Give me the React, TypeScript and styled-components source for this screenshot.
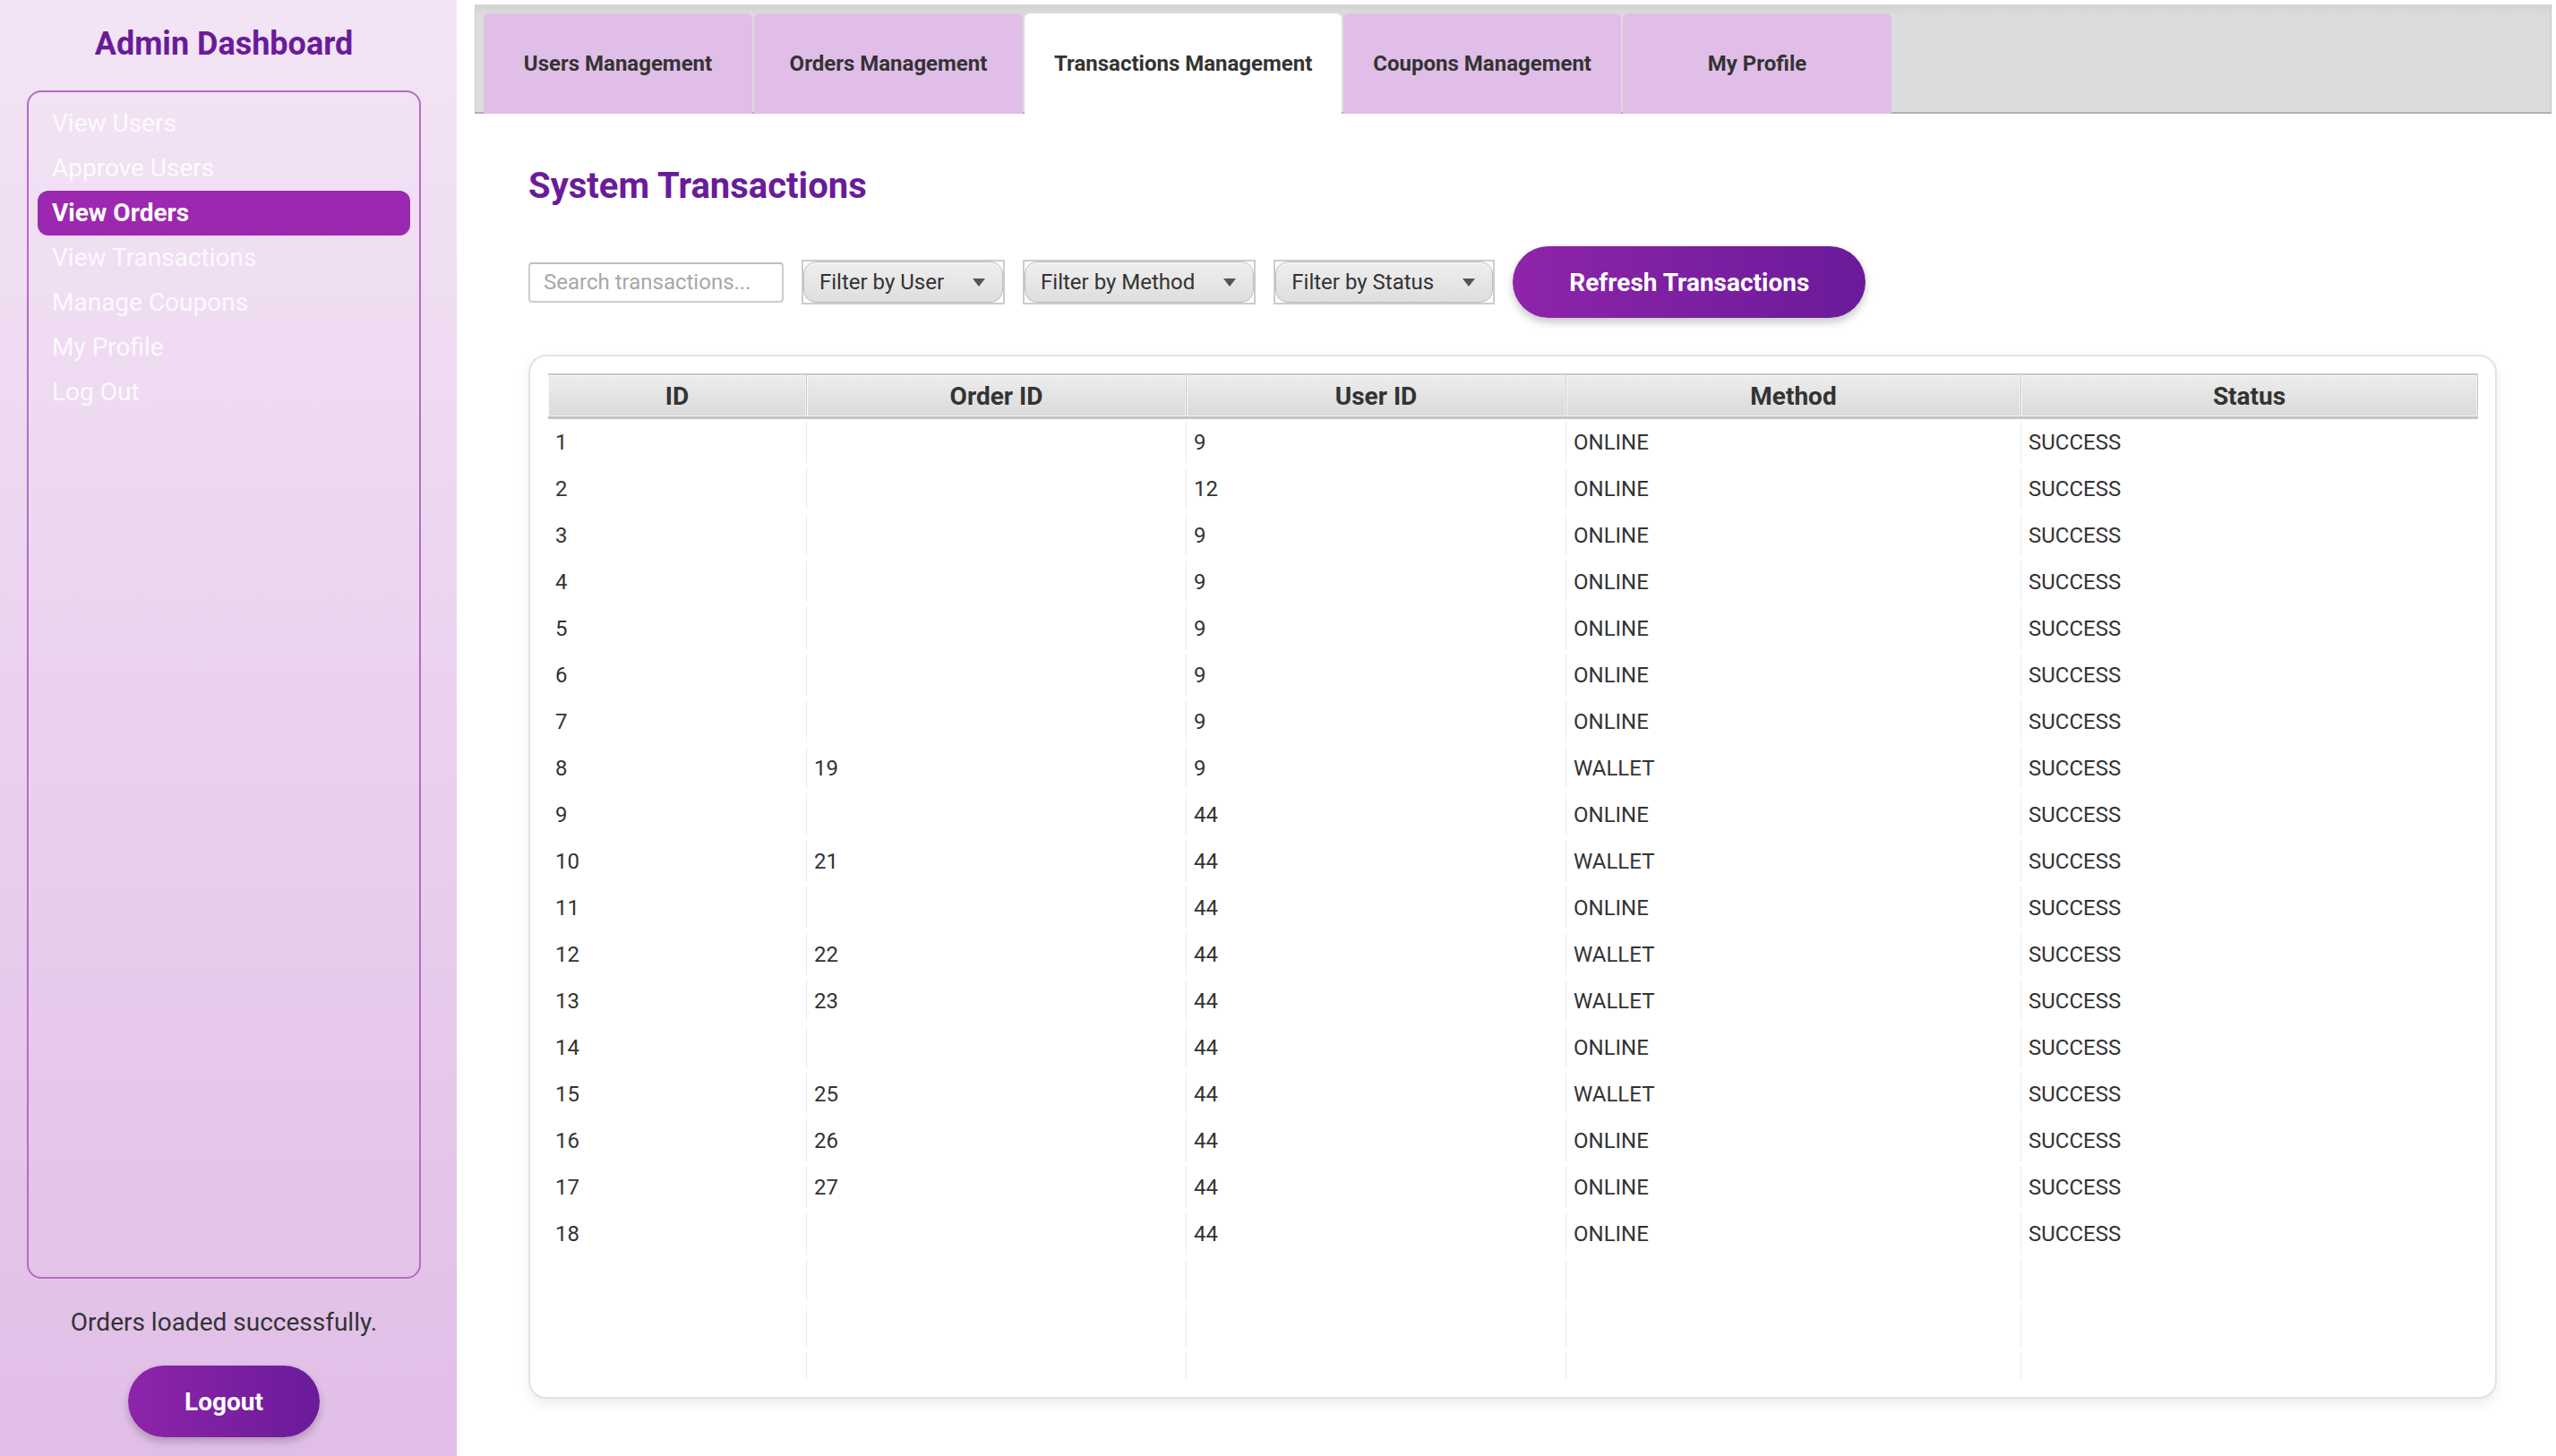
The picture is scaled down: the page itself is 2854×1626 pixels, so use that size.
import React from 'react';
import styled, { createGlobalStyle } from 'styled-components';

const GlobalStyle = createGlobalStyle`
  html, body { margin: 0; padding: 0; height: 100%; background: #fff; }
  body { font-family: Roboto, "Liberation Sans", Arial, sans-serif; color: #333; }
  #root { height: 100%; }
  *, *::before, *::after { box-sizing: border-box; }
`;

const Page = styled.div`
  display: grid;
  grid-template-columns: 510px 1fr;
  height: 100vh;
  overflow: hidden;
`;

const Sidebar = styled.aside`
  display: flex;
  flex-direction: column;
  padding: 28px 40px 21px 30px;
  background: linear-gradient(180deg, #f3e5f5 0%, #e1bee7 100%);
`;

const Brand = styled.h1`
  margin: 0;
  font-size: 36px;
  line-height: 43px;
  font-weight: 700;
  color: #6a1b9a;
  text-align: center;
`;

const NavBox = styled.nav`
  margin-top: 30px;
  flex: 1;
  min-height: 0;
  border: 2px solid #ba68c8;
  border-radius: 16px;
  padding: 10px;
  display: flex;
  flex-direction: column;
`;

const NavItem = styled.div<{ $active?: boolean }>`
  height: 50px;
  line-height: 50px;
  padding-left: 16px;
  font-size: 28px;
  border-radius: 12px;
  color: ${(p) => (p.$active ? '#ffffff' : 'rgba(255,255,255,0.85)')};
  font-weight: ${(p) => (p.$active ? 700 : 400)};
  background: ${(p) => (p.$active ? '#9c27b0' : 'transparent')};
`;

const StatusText = styled.p`
  margin: 32px 0 0;
  font-size: 28px;
  line-height: 34px;
  text-align: center;
  color: #333;
`;

const PillButton = styled.button`
  height: 80px;
  border: none;
  border-radius: 40px;
  background: linear-gradient(90deg, #8e24aa 0%, #6a1b9a 100%);
  color: #fff;
  font-family: Roboto, "Liberation Sans", Arial, sans-serif;
  font-size: 28px;
  font-weight: 700;
  box-shadow: 0 5px 10px rgba(0, 0, 0, 0.22);
  cursor: pointer;
`;

const LogoutButton = styled(PillButton)`
  align-self: center;
  margin-top: 31px;
  width: 214px;
`;

const RefreshButton = styled(PillButton)`
  padding: 0 63px;
`;

const Main = styled.main`
  display: flex;
  flex-direction: column;
  padding: 5px 5px 0 20px;
  min-width: 0;
  min-height: 0;
  background: #fff;
`;

const TabBar = styled.div`
  display: flex;
  align-items: flex-end;
  gap: 2px;
  height: 122px;
  padding: 10px 0 0 10px;
  background: linear-gradient(180deg, #d2d2d2 0px, #dcdcdc 12px, #dcdcdc 100%);
  box-shadow: inset 0 -2px 0 #b0b0b0, inset -1px 0 0 #c4c4c4, inset 1px 0 0 #cfcfcf;
`;

const Tab = styled.div<{ $active?: boolean }>`
  height: 112px;
  min-width: 300px;
  padding: 0 33px;
  display: flex;
  align-items: center;
  justify-content: center;
  font-size: 24px;
  font-weight: 700;
  color: #333;
  border-radius: 6px 6px 0 0;
  background: ${(p) => (p.$active ? '#ffffff' : '#e1bee7')};
`;

const Content = styled.section`
  flex: 1;
  min-height: 0;
  display: flex;
  flex-direction: column;
  padding: 57px 61px 64px 60px;
`;

const Heading = styled.h2`
  margin: 0;
  font-size: 40px;
  line-height: 48px;
  font-weight: 700;
  color: #6a1b9a;
`;

const Controls = styled.div`
  margin-top: 43px;
  display: flex;
  align-items: center;
  gap: 20px;
  height: 80px;
`;

const SearchInput = styled.input`
  width: 285px;
  height: 45px;
  border: 2px solid #cccccc;
  border-top-color: #bdbdbd;
  border-radius: 4px;
  padding: 0 15px;
  font-family: Roboto, "Liberation Sans", Arial, sans-serif;
  font-size: 24px;
  color: #333;
  background: #fff;
  outline: none;
  &::placeholder { color: #a8a8a8; }
`;

const ComboFrame = styled.div`
  height: 50px;
  border: 2px solid #cccccc;
  background: #fff;
`;

const ComboInner = styled.div`
  height: 100%;
  display: flex;
  align-items: center;
  gap: 32px;
  padding: 0 19px 0 17px;
  border: 1px solid #bdbdbd;
  border-radius: 14px;
  background: linear-gradient(180deg, #efefef 0%, #dedede 100%);
  box-shadow: inset 0 1px 0 #fafafa;
  font-size: 24px;
  color: #333;
  white-space: nowrap;
`;

const Card = styled.div`
  flex: 1;
  min-height: 0;
  margin-top: 41px;
  display: flex;
  flex-direction: column;
  background: #fff;
  border: 2px solid #e2e2e2;
  border-radius: 20px;
  padding: 19px 19px 19px 20px;
  box-shadow: 0 6px 14px rgba(0, 0, 0, 0.07);
`;

const Table = styled.div`
  flex: 1;
  min-height: 0;
  display: flex;
  flex-direction: column;
  overflow: hidden;
`;

const COLS = '289fr 424fr 424fr 508fr 510fr';

const HeaderRow = styled.div`
  display: grid;
  grid-template-columns: ${COLS};
`;

const HeaderCell = styled.div`
  height: 51px;
  display: flex;
  align-items: center;
  justify-content: center;
  font-size: 28px;
  font-weight: 700;
  color: #333;
  background: linear-gradient(180deg, #ededed 0%, #dadada 100%);
  border-top: 2px solid #c8c8c8;
  border-bottom: 3px solid #c4c4c4;
  border-right: 1px solid #c8c8c8;
  box-shadow: inset 1px 1px 0 #fafafa, inset -1px -1px 0 #f2f2f2;
`;

const Body = styled.div`
  flex: 1;
  min-height: 0;
  overflow: hidden;
`;

const Row = styled.div`
  display: grid;
  grid-template-columns: ${COLS};
  height: 52px;
  padding: 2px 0 3px;
`;

const Cell = styled.div`
  display: flex;
  align-items: center;
  padding-left: 8px;
  font-size: 24px;
  color: #333;
  border-right: 1px solid #ececec;
  &:last-child { border-right-color: transparent; }
`;

const Arrow = () => (
  <svg width="14" height="9" viewBox="0 0 14 9">
    <polygon points="0,0 14,0 7,9" fill="#555" />
  </svg>
);

type Tx = [number, string, string, string];

const DATA: Tx[] = [
  [1, '', '9', 'ONLINE'],
  [2, '', '12', 'ONLINE'],
  [3, '', '9', 'ONLINE'],
  [4, '', '9', 'ONLINE'],
  [5, '', '9', 'ONLINE'],
  [6, '', '9', 'ONLINE'],
  [7, '', '9', 'ONLINE'],
  [8, '19', '9', 'WALLET'],
  [9, '', '44', 'ONLINE'],
  [10, '21', '44', 'WALLET'],
  [11, '', '44', 'ONLINE'],
  [12, '22', '44', 'WALLET'],
  [13, '23', '44', 'WALLET'],
  [14, '', '44', 'ONLINE'],
  [15, '25', '44', 'WALLET'],
  [16, '26', '44', 'ONLINE'],
  [17, '27', '44', 'ONLINE'],
  [18, '', '44', 'ONLINE'],
];

const NAV = ['View Users', 'Approve Users', 'View Orders', 'View Transactions', 'Manage Coupons', 'My Profile', 'Log Out'];
const TABS = ['Users Management', 'Orders Management', 'Transactions Management', 'Coupons Management', 'My Profile'];
const FILTERS = ['Filter by User', 'Filter by Method', 'Filter by Status'];
const HEADERS = ['ID', 'Order ID', 'User ID', 'Method', 'Status'];

export default function App() {
  return (
    <>
      <GlobalStyle />
      <Page>
        <Sidebar>
          <Brand>Admin Dashboard</Brand>
          <NavBox>
            {NAV.map((n) => (
              <NavItem key={n} $active={n === 'View Orders'}>{n}</NavItem>
            ))}
          </NavBox>
          <StatusText>Orders loaded successfully.</StatusText>
          <LogoutButton>Logout</LogoutButton>
        </Sidebar>
        <Main>
          <TabBar>
            {TABS.map((t) => (
              <Tab key={t} $active={t === 'Transactions Management'}>{t}</Tab>
            ))}
          </TabBar>
          <Content>
            <Heading>System Transactions</Heading>
            <Controls>
              <SearchInput placeholder="Search transactions..." />
              {FILTERS.map((f) => (
                <ComboFrame key={f}>
                  <ComboInner>
                    <span>{f}</span>
                    <Arrow />
                  </ComboInner>
                </ComboFrame>
              ))}
              <RefreshButton>Refresh Transactions</RefreshButton>
            </Controls>
            <Card>
              <Table>
                <HeaderRow>
                  {HEADERS.map((h) => (
                    <HeaderCell key={h}>{h}</HeaderCell>
                  ))}
                </HeaderRow>
                <Body>
                  {DATA.map(([id, order, user, method]) => (
                    <Row key={id}>
                      <Cell>{id}</Cell>
                      <Cell>{order}</Cell>
                      <Cell>{user}</Cell>
                      <Cell>{method}</Cell>
                      <Cell>SUCCESS</Cell>
                    </Row>
                  ))}
                  {[0, 1, 2].map((i) => (
                    <Row key={`empty-${i}`}>
                      <Cell />
                      <Cell />
                      <Cell />
                      <Cell />
                      <Cell />
                    </Row>
                  ))}
                </Body>
              </Table>
            </Card>
          </Content>
        </Main>
      </Page>
    </>
  );
}
